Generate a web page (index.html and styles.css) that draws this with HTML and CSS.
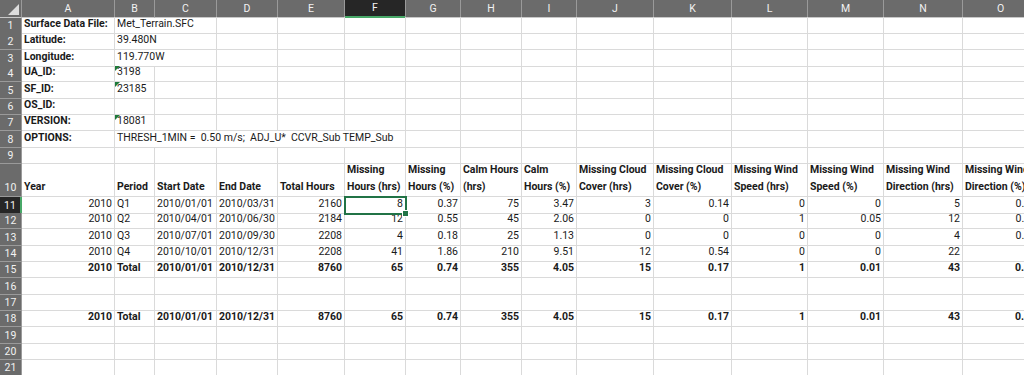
FILE: index.html
```html
<!DOCTYPE html>
<html>
<head>
<meta charset="utf-8">
<link rel="stylesheet" href="styles.css">
</head>
<body>
<div class="sheet">
  <div class="row hdr h17">
    <div class="corner"><span class="tri"></span></div>
    <div class="ch">A</div><div class="ch">B</div><div class="ch">C</div><div class="ch">D</div><div class="ch">E</div><div class="ch sel">F</div><div class="ch">G</div><div class="ch">H</div><div class="ch">I</div><div class="ch">J</div><div class="ch">K</div><div class="ch">L</div><div class="ch">M</div><div class="ch">N</div><div class="ch">O</div>
  </div>

  <div class="row h16">
    <div class="rh">1</div><div class="c b">Surface Data File:</div><div class="c s2">Met_Terrain.SFC</div><div class="c"></div><div class="c"></div><div class="c"></div><div class="c"></div><div class="c"></div><div class="c"></div><div class="c"></div><div class="c"></div><div class="c"></div><div class="c"></div><div class="c"></div><div class="c"></div>
  </div>
  <div class="row h17">
    <div class="rh">2</div><div class="c b">Latitude:</div><div class="c s2">39.480N</div><div class="c"></div><div class="c"></div><div class="c"></div><div class="c"></div><div class="c"></div><div class="c"></div><div class="c"></div><div class="c"></div><div class="c"></div><div class="c"></div><div class="c"></div><div class="c"></div>
  </div>
  <div class="row h16">
    <div class="rh">3</div><div class="c b">Longitude:</div><div class="c s2">119.770W</div><div class="c"></div><div class="c"></div><div class="c"></div><div class="c"></div><div class="c"></div><div class="c"></div><div class="c"></div><div class="c"></div><div class="c"></div><div class="c"></div><div class="c"></div><div class="c"></div>
  </div>
  <div class="row h16">
    <div class="rh">4</div><div class="c b">UA_ID:</div><div class="c txt">3198</div><div class="c"></div><div class="c"></div><div class="c"></div><div class="c"></div><div class="c"></div><div class="c"></div><div class="c"></div><div class="c"></div><div class="c"></div><div class="c"></div><div class="c"></div><div class="c"></div><div class="c"></div>
  </div>
  <div class="row h17">
    <div class="rh">5</div><div class="c b">SF_ID:</div><div class="c txt">23185</div><div class="c"></div><div class="c"></div><div class="c"></div><div class="c"></div><div class="c"></div><div class="c"></div><div class="c"></div><div class="c"></div><div class="c"></div><div class="c"></div><div class="c"></div><div class="c"></div><div class="c"></div>
  </div>
  <div class="row h16">
    <div class="rh">6</div><div class="c b">OS_ID:</div><div class="c"></div><div class="c"></div><div class="c"></div><div class="c"></div><div class="c"></div><div class="c"></div><div class="c"></div><div class="c"></div><div class="c"></div><div class="c"></div><div class="c"></div><div class="c"></div><div class="c"></div><div class="c"></div>
  </div>
  <div class="row h16">
    <div class="rh">7</div><div class="c b">VERSION:</div><div class="c txt">18081</div><div class="c"></div><div class="c"></div><div class="c"></div><div class="c"></div><div class="c"></div><div class="c"></div><div class="c"></div><div class="c"></div><div class="c"></div><div class="c"></div><div class="c"></div><div class="c"></div><div class="c"></div>
  </div>
  <div class="row h17">
    <div class="rh">8</div><div class="c b">OPTIONS:</div><div class="c s5 pre">THRESH_1MIN =  0.50 m/s;  ADJ_U*  CCVR_Sub TEMP_Sub</div><div class="c"></div><div class="c"></div><div class="c"></div><div class="c"></div><div class="c"></div><div class="c"></div><div class="c"></div><div class="c"></div><div class="c"></div>
  </div>
  <div class="row h16">
    <div class="rh">9</div><div class="c"></div><div class="c"></div><div class="c"></div><div class="c"></div><div class="c"></div><div class="c"></div><div class="c"></div><div class="c"></div><div class="c"></div><div class="c"></div><div class="c"></div><div class="c"></div><div class="c"></div><div class="c"></div><div class="c"></div>
  </div>

  <div class="row h33 head">
    <div class="rh">10</div>
    <div class="c b"><span>Year</span></div>
    <div class="c b"><span>Period</span></div>
    <div class="c b"><span>Start Date</span></div>
    <div class="c b"><span>End Date</span></div>
    <div class="c b"><span>Total Hours</span></div>
    <div class="c b"><span>Missing<br>Hours (hrs)</span></div>
    <div class="c b"><span>Missing<br>Hours (%)</span></div>
    <div class="c b"><span>Calm Hours<br>(hrs)</span></div>
    <div class="c b"><span>Calm<br>Hours (%)</span></div>
    <div class="c b"><span>Missing Cloud<br>Cover (hrs)</span></div>
    <div class="c b"><span>Missing Cloud<br>Cover (%)</span></div>
    <div class="c b"><span>Missing Wind<br>Speed (hrs)</span></div>
    <div class="c b"><span>Missing Wind<br>Speed (%)</span></div>
    <div class="c b"><span>Missing Wind<br>Direction (hrs)</span></div>
    <div class="c b"><span>Missing Wind<br>Direction (%)</span></div>
  </div>

  <div class="row h16">
    <div class="rh rsel">11</div>
    <div class="c n">2010</div><div class="c">Q1</div><div class="c">2010/01/01</div><div class="c">2010/03/31</div><div class="c n">2160</div>
    <div class="c n active">8<span class="handle"></span></div><div class="c n">0.37</div><div class="c n">75</div><div class="c n">3.47</div><div class="c n">3</div><div class="c n">0.14</div><div class="c n">0</div><div class="c n">0</div><div class="c n">5</div><div class="c n">0.23</div>
  </div>
  <div class="row h16">
    <div class="rh">12</div>
    <div class="c n">2010</div><div class="c">Q2</div><div class="c">2010/04/01</div><div class="c">2010/06/30</div><div class="c n">2184</div>
    <div class="c n">12</div><div class="c n">0.55</div><div class="c n">45</div><div class="c n">2.06</div><div class="c n">0</div><div class="c n">0</div><div class="c n">1</div><div class="c n">0.05</div><div class="c n">12</div><div class="c n">0.55</div>
  </div>
  <div class="row h17">
    <div class="rh">13</div>
    <div class="c n">2010</div><div class="c">Q3</div><div class="c">2010/07/01</div><div class="c">2010/09/30</div><div class="c n">2208</div>
    <div class="c n">4</div><div class="c n">0.18</div><div class="c n">25</div><div class="c n">1.13</div><div class="c n">0</div><div class="c n">0</div><div class="c n">0</div><div class="c n">0</div><div class="c n">4</div><div class="c n">0.18</div>
  </div>
  <div class="row h16">
    <div class="rh">14</div>
    <div class="c n">2010</div><div class="c">Q4</div><div class="c">2010/10/01</div><div class="c">2010/12/31</div><div class="c n">2208</div>
    <div class="c n">41</div><div class="c n">1.86</div><div class="c n">210</div><div class="c n">9.51</div><div class="c n">12</div><div class="c n">0.54</div><div class="c n">0</div><div class="c n">0</div><div class="c n">22</div><div class="c n">1</div>
  </div>
  <div class="row h16 bold">
    <div class="rh">15</div>
    <div class="c n">2010</div><div class="c">Total</div><div class="c">2010/01/01</div><div class="c">2010/12/31</div><div class="c n">8760</div>
    <div class="c n">65</div><div class="c n">0.74</div><div class="c n">355</div><div class="c n">4.05</div><div class="c n">15</div><div class="c n">0.17</div><div class="c n">1</div><div class="c n">0.01</div><div class="c n">43</div><div class="c n">0.49</div>
  </div>
  <div class="row h17">
    <div class="rh">16</div><div class="c"></div><div class="c"></div><div class="c"></div><div class="c"></div><div class="c"></div><div class="c"></div><div class="c"></div><div class="c"></div><div class="c"></div><div class="c"></div><div class="c"></div><div class="c"></div><div class="c"></div><div class="c"></div><div class="c"></div>
  </div>
  <div class="row h16">
    <div class="rh">17</div><div class="c"></div><div class="c"></div><div class="c"></div><div class="c"></div><div class="c"></div><div class="c"></div><div class="c"></div><div class="c"></div><div class="c"></div><div class="c"></div><div class="c"></div><div class="c"></div><div class="c"></div><div class="c"></div><div class="c"></div>
  </div>
  <div class="row h16 bold">
    <div class="rh">18</div>
    <div class="c n">2010</div><div class="c">Total</div><div class="c">2010/01/01</div><div class="c">2010/12/31</div><div class="c n">8760</div>
    <div class="c n">65</div><div class="c n">0.74</div><div class="c n">355</div><div class="c n">4.05</div><div class="c n">15</div><div class="c n">0.17</div><div class="c n">1</div><div class="c n">0.01</div><div class="c n">43</div><div class="c n">0.49</div>
  </div>
  <div class="row h17">
    <div class="rh">19</div><div class="c"></div><div class="c"></div><div class="c"></div><div class="c"></div><div class="c"></div><div class="c"></div><div class="c"></div><div class="c"></div><div class="c"></div><div class="c"></div><div class="c"></div><div class="c"></div><div class="c"></div><div class="c"></div><div class="c"></div>
  </div>
  <div class="row h16">
    <div class="rh">20</div><div class="c"></div><div class="c"></div><div class="c"></div><div class="c"></div><div class="c"></div><div class="c"></div><div class="c"></div><div class="c"></div><div class="c"></div><div class="c"></div><div class="c"></div><div class="c"></div><div class="c"></div><div class="c"></div><div class="c"></div>
  </div>
  <div class="row h16">
    <div class="rh">21</div><div class="c"></div><div class="c"></div><div class="c"></div><div class="c"></div><div class="c"></div><div class="c"></div><div class="c"></div><div class="c"></div><div class="c"></div><div class="c"></div><div class="c"></div><div class="c"></div><div class="c"></div><div class="c"></div><div class="c"></div>
  </div>
</div>
</body>
</html>
```

FILE: styles.css
```css
html, body {
  margin: 0;
  padding: 0;
  background: #ffffff;
  overflow: hidden;
}
body {
  width: 1024px;
  height: 375px;
  font-family: "Roboto", "Liberation Sans", sans-serif;
  font-size: 10.5px;
  color: #1a1a1a;
}
.sheet {
  width: 1040px;
  display: flex;
  flex-direction: column;
}
.row {
  display: grid;
  grid-template-columns: 22px 93px 40px 62px 61px 67px 61px 55px 61px 55px 77px 78px 76px 76px 79px 76px;
}
.h16 { height: 16px; }
.h17 { height: 17px; }
.h33 { height: 33px; }

.c {
  box-sizing: border-box;
  border-right: 1px solid #dadada;
  border-bottom: 1px solid #dadada;
  padding: 0 2px 2px 2px;
  white-space: nowrap;
  overflow: hidden;
  display: flex;
  align-items: flex-end;
  line-height: 14px;
  position: relative;
}
.c.n { justify-content: flex-end; }
.c.b, .bold .c { font-weight: 700; }
.s2 { grid-column: span 2; overflow: visible; }
.s5 { grid-column: span 5; overflow: visible; }
.pre { white-space: pre; }
.head .c {
  line-height: 16.3px;
  padding-bottom: 1px;
}

.txt::before {
  content: "";
  position: absolute;
  left: 0;
  top: 0;
  border-top: 5px solid #1d7a3c;
  border-right: 5px solid transparent;
}

.hdr .ch, .corner {
  box-sizing: border-box;
  background: #6b6b6b;
  color: #f2f2f2;
  border-right: 1px solid #9a9a9a;
  border-bottom: 1px solid #c8c8c8;
  display: flex;
  align-items: center;
  justify-content: center;
  font-size: 10.5px;
  line-height: 16px;
}
.hdr .ch.sel {
  background: #262626;
  border-bottom: 2px solid #48a868;
}
.corner {
  position: relative;
}
.corner .tri {
  position: absolute;
  right: 2px;
  bottom: 2px;
  border-bottom: 11px solid #dcdcdc;
  border-left: 11px solid transparent;
}
.rh {
  box-sizing: border-box;
  background: #6b6b6b;
  color: #f2f2f2;
  border-right: 1px solid #9a9a9a;
  border-bottom: 1px solid #9a9a9a;
  display: flex;
  align-items: center;
  justify-content: center;
  font-size: 10.5px;
}
.head .rh {
  align-items: flex-end;
  padding-bottom: 2px;
}
.rh.rsel {
  background: #262626;
  border-right: 2px solid #48a868;
}
.c.active {
  outline: 2px solid #217346;
  outline-offset: -1px;
  z-index: 2;
  overflow: visible;
}
.handle {
  position: absolute;
  right: -4px;
  bottom: -4px;
  width: 5px;
  height: 5px;
  background: #217346;
  border: 1px solid #ffffff;
}
```
